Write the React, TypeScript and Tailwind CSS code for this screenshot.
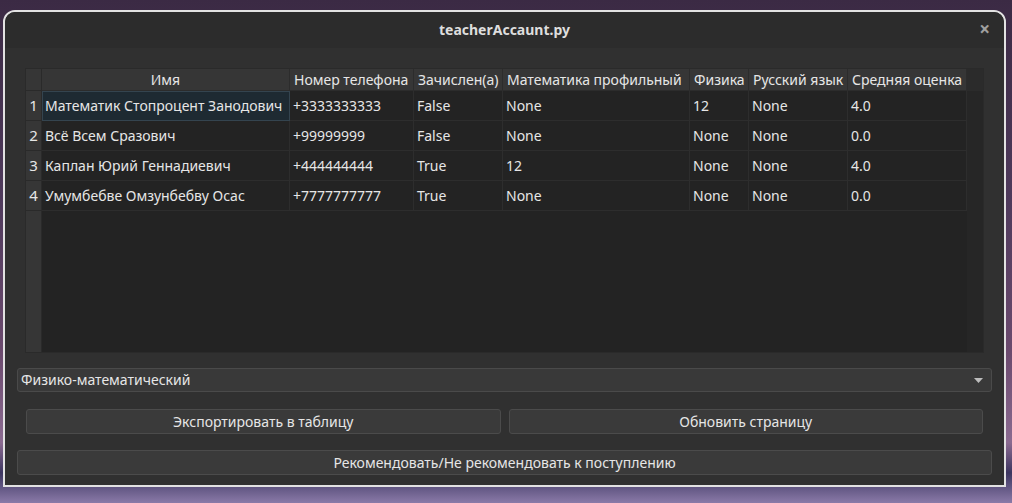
import React from "react";

const cols = [
  { name: "Имя", w: 248, center: true },
  { name: "Номер телефона", w: 124 },
  { name: "Зачислен(а)", w: 89 },
  { name: "Математика профильный", w: 187 },
  { name: "Физика", w: 59 },
  { name: "Русский язык", w: 99 },
  { name: "Средняя оценка", w: 119 },
];

const rows = [
  ["Математик Стопроцент Занодович", "+3333333333", "False", "None", "12", "None", "4.0"],
  ["Всё Всем Сразович", "+99999999", "False", "None", "None", "None", "0.0"],
  ["Каплан Юрий Геннадиевич", "+444444444", "True", "12", "None", "None", "4.0"],
  ["Умумбебве Омзунбебву Осас", "+7777777777", "True", "None", "None", "None", "0.0"],
];

export default function App() {
  return (
    <div
      className="relative w-[1012px] h-[503px] overflow-hidden pt-[10px] pl-[3px] bg-[linear-gradient(180deg,#3b2a44_0%,#4f3a5c_40%,#6b4a6e_70%,#8a6a90_88%,#3c3560_94%,#8a7aa8_100%)]"
      style={{ fontFamily: '"Noto Sans", "Open Sans", sans-serif' }}
    >
      <div className="w-[1003px] h-[477px] border-2 border-[#e2e2e2] rounded-t-[12px] bg-[#303030] flex flex-col overflow-hidden">
        {/* title bar */}
        <div className="h-[36px] shrink-0 bg-[#2c2c2c] relative flex items-center justify-center">
          <span className="text-[14px] font-bold text-[#dedede] leading-none">teacherAccaunt.py</span>
          <span className="absolute right-[14px] top-[8px] text-[19px] leading-none text-[#a0a0a0] font-bold">×</span>
        </div>
        {/* content */}
        <div className="flex-1 flex flex-col px-[12px]">
          {/* table */}
          <div className="mt-[20px] mx-[8px] h-[285px] bg-[#232323] border border-[#2a2a2a] flex flex-col text-[14px] text-[#e6e6e6]">
            {/* header */}
            <div className="flex h-[22px] shrink-0">
              <div className="w-[16px] bg-[#363636] border-r border-b border-[#2a2a2a]" />
              {cols.map((c) => (
                <div
                  key={c.name}
                  style={{ width: c.w }}
                  className={`bg-[#363636] border-r border-b border-[#2c2c2c] flex items-center px-[4px] whitespace-nowrap leading-none ${
                    c.center ? "justify-center" : ""
                  }`}
                >
                  {c.name}
                </div>
              ))}
              <div className="flex-1 bg-[#2b2b2b]" />
            </div>
            <div className="flex flex-1">
              <div className="w-[16px] flex flex-col bg-[#363636] border-r border-[#2a2a2a]">
                {rows.map((_, i) => (
                  <div
                    key={i}
                    className="h-[30px] flex items-center justify-center border-b border-[#2a2a2a] text-[15px] leading-none"
                  >
                    {i + 1}
                  </div>
                ))}
              </div>
              <div className="flex flex-col">
                {rows.map((r, i) => (
                  <div key={i} className="flex h-[30px]">
                    {r.map((v, j) => (
                      <div
                        key={j}
                        style={{ width: cols[j].w }}
                        className={`flex items-center whitespace-nowrap leading-none ${
                          i === 0 && j === 0
                            ? "bg-[#1e2a32] border border-[#34444f] px-[2px]"
                            : "border-r border-b border-[#2d2d2d] px-[3px]"
                        }`}
                      >
                        {v}
                      </div>
                    ))}
                  </div>
                ))}
              </div>
              <div className="flex-1 bg-[#262626]" />
            </div>
          </div>

          {/* combo */}
          <div className="mt-[15px] h-[24px] rounded-[3px] bg-[#393939] border border-[#4a4a4a] flex items-center justify-between pl-[3px] pr-[8px] text-[14px] text-[#e6e6e6]">
            <span className="leading-none">Физико-математический</span>
            <svg width="9" height="5" viewBox="0 0 9 5">
              <path d="M0 0 L9 0 L4.5 5 Z" fill="#bdbdbd" />
            </svg>
          </div>

          {/* buttons row */}
          <div className="mt-[17px] mx-[9px] flex gap-[8px]">
            <button className="flex-1 h-[25px] rounded-[3px] bg-[#3a3a3a] border border-[#4b4b4b] text-[14px] text-[#e6e6e6] leading-none">
              Экспортировать в таблицу
            </button>
            <button className="flex-1 h-[25px] rounded-[3px] bg-[#3a3a3a] border border-[#4b4b4b] text-[14px] text-[#e6e6e6] leading-none">
              Обновить страницу
            </button>
          </div>

          <button className="mt-[16px] h-[25px] rounded-[3px] bg-[#3a3a3a] border border-[#4b4b4b] text-[14px] text-[#e6e6e6] leading-none">
            Рекомендовать/Не рекомендовать к поступлению
          </button>
        </div>
      </div>
    </div>
  );
}
